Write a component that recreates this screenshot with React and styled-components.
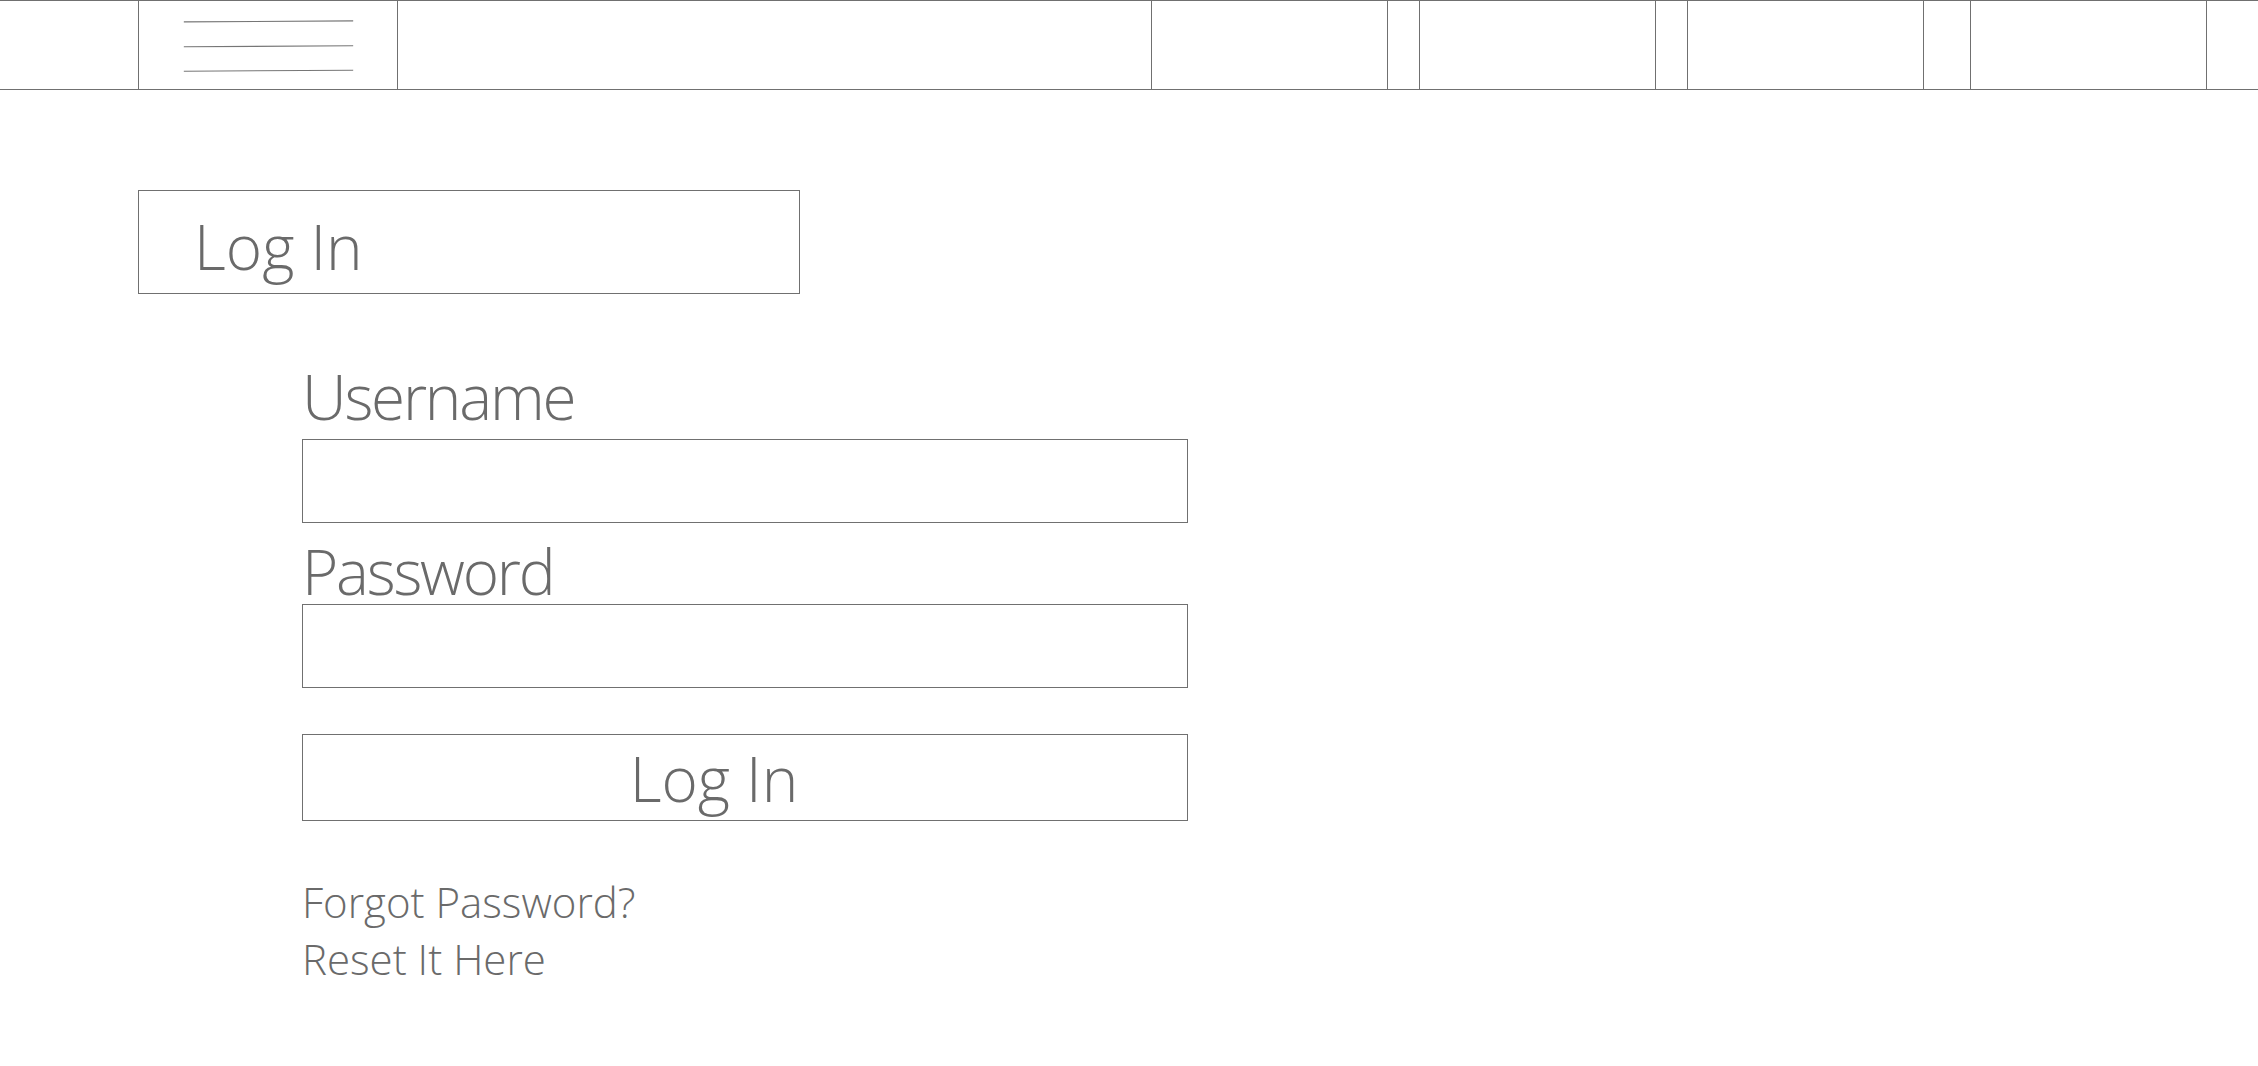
import styled, { createGlobalStyle } from "styled-components"

const GlobalStyle = createGlobalStyle`
    html, body {
        margin: 0;
        padding: 0;
        background: #FFFFFF;
    }
    body {
        font-family: "Open Sans", "Noto Sans", sans-serif;
        font-weight: 350;
        color: #6a6a6a;
    }
    * {
        box-sizing: border-box;
    }
`

const navItems = [
    { id: 1, gap: 0 },
    { id: 2, gap: 32 },
    { id: 3, gap: 32 },
    { id: 4, gap: 47 },
]

function MenuIcon() {
    return (
        <svg width="259" height="88" viewBox="0 0 259 88">
            <line x1="45" y1="20.8" x2="215" y2="19.8" stroke="#767676" strokeWidth="1.1" />
            <line x1="45" y1="45.8" x2="215" y2="44.8" stroke="#767676" strokeWidth="1.1" />
            <line x1="45" y1="70.3" x2="215" y2="69.3" stroke="#767676" strokeWidth="1.1" />
        </svg>
    )
}

export default function App() {
    return (
        <>
            <GlobalStyle />
            <Header>
                <Spacer />
                <MenuCell>
                    <MenuIcon />
                </MenuCell>
                <Filler />
                <Nav>
                    {navItems.map((item) => (
                        <NavItem key={item.id} gap={item.gap} />
                    ))}
                </Nav>
            </Header>

            <Main>
                <TitleBox>
                    <h1>Log In</h1>
                </TitleBox>

                <Form onSubmit={(e) => e.preventDefault()}>
                    <Label htmlFor="username" top={71} bottom={12}>Username</Label>
                    <Input id="username" type="text" />
                    <Label htmlFor="password" top={17} bottom={2}>Password</Label>
                    <Input id="password" type="password" />
                    <Button type="submit">Log In</Button>

                    <Links>
                        <p>Forgot Password?</p>
                        <p>Reset It Here</p>
                    </Links>
                </Form>
            </Main>
        </>
    )
}

const Header = styled.header`
    width: 100%;
    height: 90px;
    display: flex;
    border-top: 1px solid #707070;
    border-bottom: 1px solid #707070;
`

const Spacer = styled.div`
    width: 138px;
    flex-shrink: 0;
`

const MenuCell = styled.div`
    width: 260px;
    flex-shrink: 0;
    border-left: 1px solid #707070;
    border-right: 1px solid #707070;
    display: flex;
    align-items: center;

    svg {
        display: block;
    }
`

const Filler = styled.div`
    flex: 1;
`

const Nav = styled.nav`
    display: flex;
    padding-right: 51px;
`

const NavItem = styled.div`
    width: 237px;
    height: 100%;
    margin-left: ${props => props.gap - 1}px;
    border-left: 1px solid #707070;
    border-right: 1px solid #707070;

    &:first-child {
        margin-left: 0;
    }
`

const Main = styled.main`
    padding-left: 138px;
    padding-top: 100px;
    padding-bottom: 60px;
`

const TitleBox = styled.div`
    width: 662px;
    height: 104px;
    border: 1px solid #707070;
    display: flex;
    align-items: center;
    padding-left: 55px;

    h1 {
        margin: 0;
        font-size: 62px;
        font-weight: inherit;
        line-height: 62px;
        color: inherit;
        padding-top: 7px;
    }
`

const Form = styled.form`
    width: 886px;
    margin-left: 164px;
    display: flex;
    flex-direction: column;
`

const Label = styled.label`
    display: block;
    font-size: 62px;
    line-height: 62px;
    letter-spacing: -2.2px;
    margin-top: ${props => props.top}px;
    margin-bottom: ${props => props.bottom}px;
`

const Input = styled.input`
    width: 100%;
    height: 84px;
    border: 1px solid #707070;
    border-radius: 0;
    outline: none;
    background: #FFFFFF;
    font-family: inherit;
    font-size: 40px;
    color: inherit;
    padding: 0 20px;
`

const Button = styled.button`
    width: 100%;
    height: 87px;
    margin-top: 46px;
    border: 1px solid #707070;
    border-radius: 0;
    background: #FFFFFF;
    font-family: inherit;
    font-weight: inherit;
    font-size: 62px;
    line-height: 62px;
    color: inherit;
    padding: 0 62px 0 0;
    cursor: pointer;
`

const Links = styled.div`
    margin-top: 52px;

    p {
        margin: 0;
        font-size: 42px;
        line-height: 57px;
    }
`
